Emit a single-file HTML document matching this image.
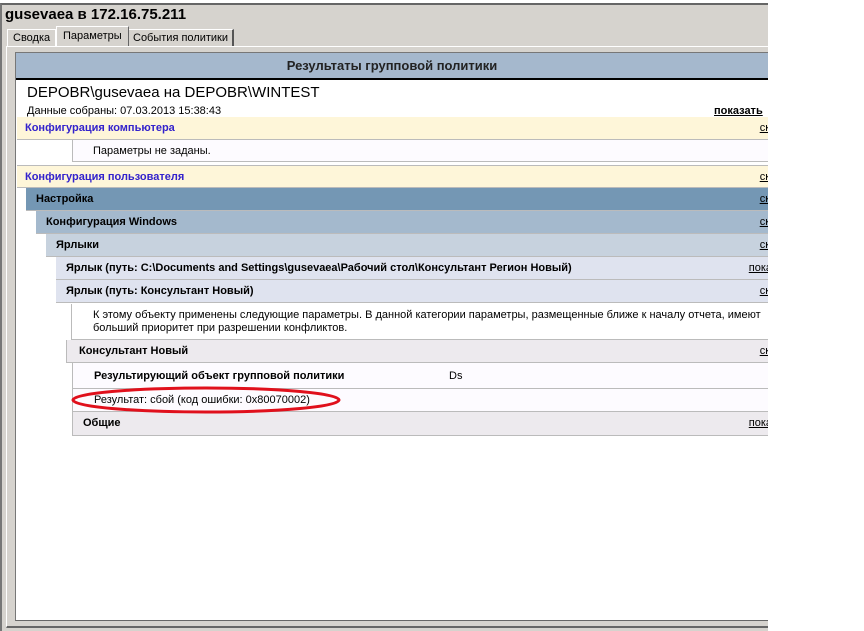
<!DOCTYPE html>
<html><head><meta charset="utf-8"><style>
*{margin:0;padding:0;box-sizing:border-box}
body{width:864px;height:631px;background:#fff;position:relative;overflow:hidden;font-family:"Liberation Sans",Arial,sans-serif;font-size:11px;color:#000}
.a{position:absolute}
#w{position:absolute;left:0;top:0;width:768px;height:631px;overflow:hidden}
.r{position:absolute;right:0;height:23px;line-height:23px;border-bottom:1px solid #bbb}
.r b{padding-left:10px}
.lk{position:absolute;right:-2px;top:0;text-decoration:underline;font-size:11px;color:#000}
.lk.p{right:-4px}
</style></head><body><div id="w">
<div class="a" style="left:0;top:3px;width:768px;height:628px;background:#d6d3ce;border-top:2px solid #666;border-left:2px solid #777"></div>
<div class="a" style="left:5px;top:6px;font-weight:bold;font-size:15px">gusevaea в 172.16.75.211</div>
<div class="a" style="left:7px;top:29px;width:49px;height:17px;border:1px solid #fff;border-bottom:none;padding:2px 0 0 5px;font-size:11px">Сводка</div>
<div class="a" style="left:56px;top:26px;width:73px;height:21px;border:1px solid #fff;border-right:1px solid #666;border-bottom:none;background:#d6d3ce;padding:3px 0 0 6px">Параметры</div>
<div class="a" style="left:129px;top:29px;width:105px;height:17px;border-top:1px solid #fff;border-right:2px solid #555;padding:2px 0 0 4px">События политики</div>
<div class="a" style="left:6px;top:46px;width:762px;height:582px;border-left:1px solid #fff;border-top:1px solid #fff;border-bottom:2px solid #666"></div>
<div class="a" style="left:15px;top:52px;width:753px;height:569px;background:#fff;border-left:1px solid #777;border-top:1px solid #777;border-bottom:1px solid #666"></div>
<div class="a" style="left:16px;top:53px;width:752px;height:27px;background:#a5b8cd;border-bottom:2px solid #000;text-align:center;line-height:26px;font-weight:bold;font-size:13px;color:#222">Результаты групповой политики</div>
<div class="a" style="left:27px;top:84px;font-size:15px">DEPOBR\gusevaea на DEPOBR\WINTEST</div>
<div class="a" style="left:27px;top:105px;font-size:11px">Данные собраны: 07.03.2013 15:38:43</div>
<div class="a" style="left:714px;top:105px;font-weight:bold;text-decoration:underline">показать</div>
<div class="r" style="left:17px;top:117px;background:#fef6d9"><b style="color:#3322cc;padding-left:8px">Конфигурация компьютера</b><span class="lk">ск</span></div>
<div class="r" style="left:72px;top:140px;height:22px;background:#fdfbff;border-left:1px solid #bbb;line-height:22px"><span style="padding-left:20px">Параметры не заданы.</span></div>
<div class="r" style="left:17px;top:165px;background:#fef6d9;border-top:1px solid #bbb"><b style="color:#3322cc;padding-left:8px">Конфигурация пользователя</b><span class="lk">ск</span></div>
<div class="r" style="left:26px;top:188px;background:#7497b4"><b>Настройка</b><span class="lk">ск</span></div>
<div class="r" style="left:36px;top:211px;background:#a4b9cd"><b>Конфигурация Windows</b><span class="lk">ск</span></div>
<div class="r" style="left:46px;top:234px;background:#c7d2de"><b>Ярлыки</b><span class="lk">ск</span></div>
<div class="r" style="left:56px;top:257px;background:#dfe3ef"><b>Ярлык (путь: C:\Documents and Settings\gusevaea\Рабочий стол\Консультант Регион Новый)</b><span class="lk p">пока</span></div>
<div class="r" style="left:56px;top:280px;background:#dfe3ef"><b>Ярлык (путь: Консультант Новый)</b><span class="lk">ск</span></div>
<div class="a" style="left:71px;top:304px;width:697px;height:36px;border-left:1px solid #bbb;padding:5px 0 0 21px;line-height:13px;background:#fff;border-bottom:1px solid #bbb">К этому объекту применены следующие параметры. В данной категории параметры, размещенные ближе к началу отчета, имеют<br>больший приоритет при разрешении конфликтов.</div>
<div class="r" style="left:66px;top:340px;height:23px;background:#edeaee;border-left:1px solid #bbb"><b style="padding-left:12px">Консультант Новый</b><span class="lk">ск</span></div>
<div class="r" style="left:72px;top:363px;height:26px;line-height:26px;background:#fdfbff;border-left:1px solid #bbb"><b style="padding-left:21px">Результирующий объект групповой политики</b><span style="position:absolute;left:376px">Ds</span></div>
<div class="r" style="left:72px;top:389px;height:23px;background:#fdfbff;border-left:1px solid #bbb"><span style="padding-left:21px">Результат: сбой (код ошибки: 0x80070002)</span></div>
<div class="r" style="left:72px;top:412px;height:24px;background:#edeaee;border-left:1px solid #bbb"><b style="padding-left:10px">Общие</b><span class="lk p">пока</span></div>
<svg class="a" style="left:0;top:0" width="768" height="631"><ellipse cx="206" cy="400" rx="133" ry="12" fill="none" stroke="#e0101c" stroke-width="3"/></svg>
</div></body></html>
